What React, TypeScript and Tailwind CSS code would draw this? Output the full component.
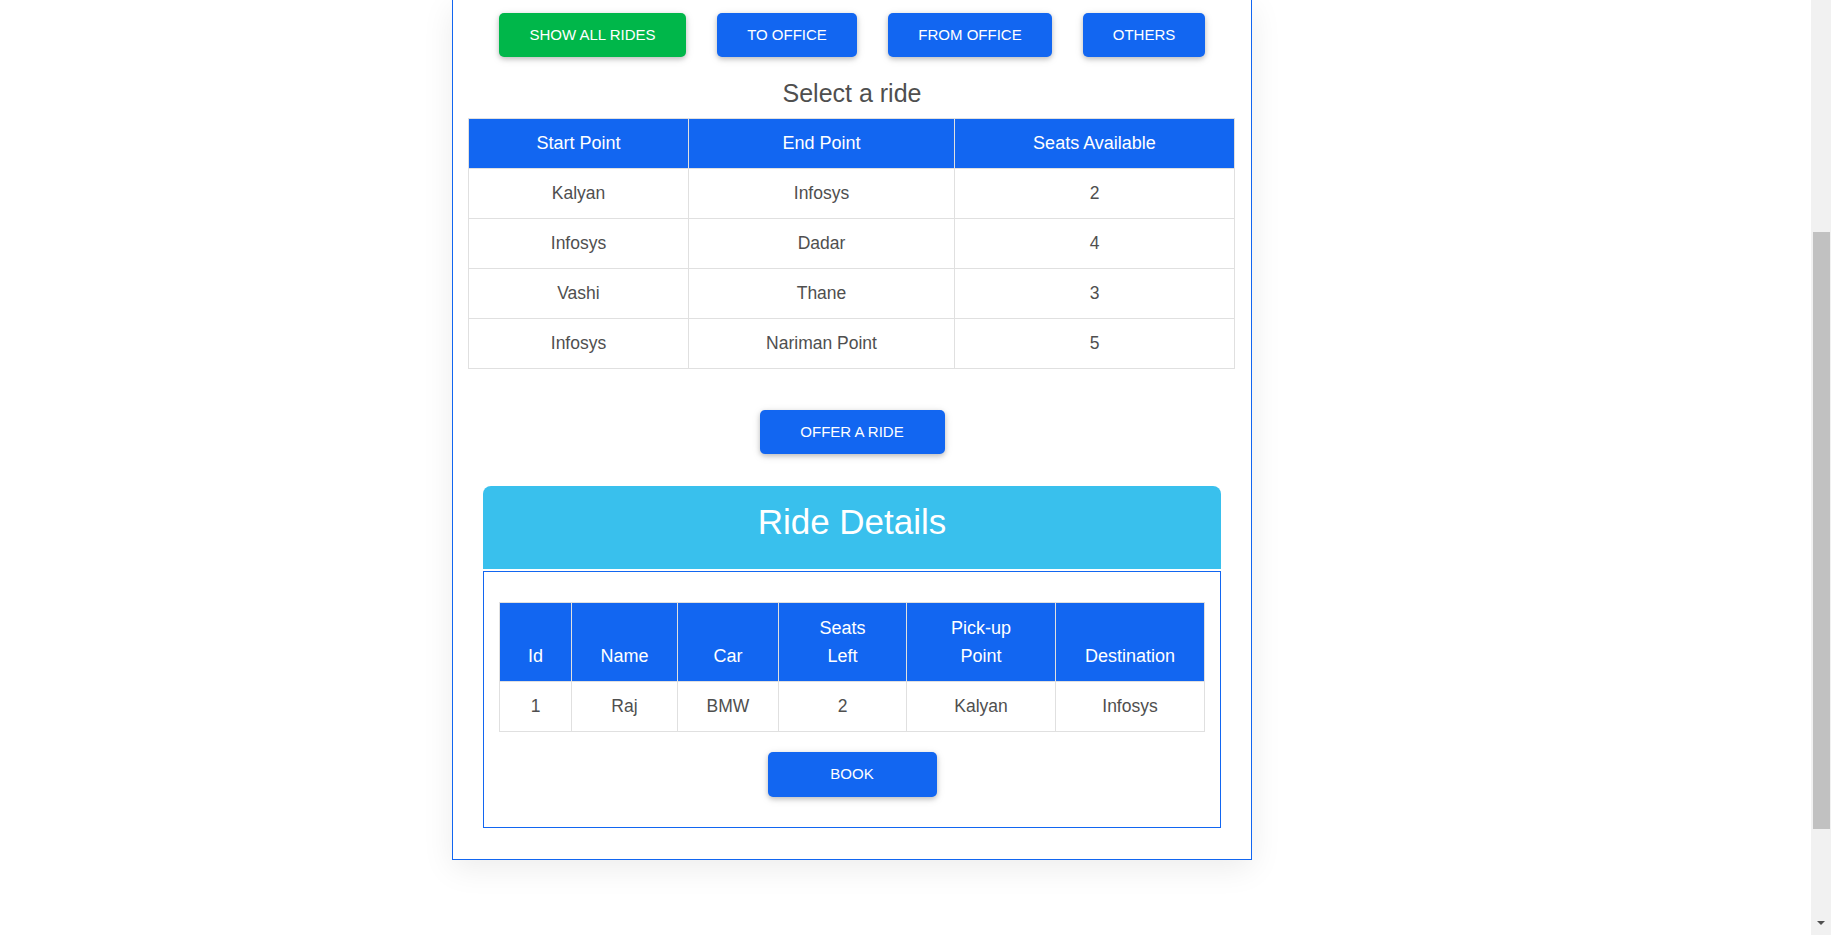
import React from "react";

const rides: [string, string, string][] = [
  ["Kalyan", "Infosys", "2"],
  ["Infosys", "Dadar", "4"],
  ["Vashi", "Thane", "3"],
  ["Infosys", "Nariman Point", "5"],
];

const btnBase =
  "flex h-[44px] items-center justify-center rounded-[5px] text-[15px] uppercase text-white shadow-[0_2px_5px_0_rgba(0,0,0,0.2),0_2px_10px_0_rgba(0,0,0,0.1)]";

export default function App() {
  return (
    <div className="relative h-[935px] overflow-hidden bg-white font-['Liberation_Sans',Arial,sans-serif]">
      <div className="ml-[452px] w-[800px] border border-t-0 border-[#1266f1] bg-white pt-[13px] pb-[31px] shadow-[0_8px_30px_0_rgba(0,0,0,0.08)]">
        {/* filter buttons */}
        <div className="flex justify-center gap-[31px]">
          <button className={`${btnBase} w-[187px] bg-[#00b74a]`}>Show all rides</button>
          <button className={`${btnBase} w-[140px] bg-[#1266f1]`}>To office</button>
          <button className={`${btnBase} w-[164px] bg-[#1266f1]`}>From office</button>
          <button className={`${btnBase} w-[122px] bg-[#1266f1]`}>Others</button>
        </div>

        <div className="mt-[21px] text-center text-[25px] leading-[30px] text-[#4f4f4f]">Select a ride</div>

        <table className="mt-[10px] ml-[15px] w-[767px] table-fixed border-collapse text-center">
          <thead>
            <tr>
              <th className="w-[220px] border border-[#e0e0e0] bg-[#1266f1] py-[11px] text-[18px] font-normal leading-[27px] text-white">
                Start Point
              </th>
              <th className="w-[266px] border border-[#e0e0e0] bg-[#1266f1] py-[11px] text-[18px] font-normal leading-[27px] text-white">
                End Point
              </th>
              <th className="border border-[#e0e0e0] bg-[#1266f1] py-[11px] text-[18px] font-normal leading-[27px] text-white">
                Seats Available
              </th>
            </tr>
          </thead>
          <tbody>
            {rides.map((r, i) => (
              <tr key={i}>
                {r.map((c, j) => (
                  <td
                    key={j}
                    className="border border-[#e0e0e0] py-[11px] text-[17.5px] leading-[27px] text-[#4f4f4f]"
                  >
                    {c}
                  </td>
                ))}
              </tr>
            ))}
          </tbody>
        </table>

        <button className={`${btnBase} mx-auto mt-[41px] w-[185px] bg-[#1266f1]`}>Offer a ride</button>

        {/* Ride details */}
        <div className="mt-[32px] ml-[30px] w-[738px]">
          <div className="h-[83px] rounded-t-[8px] bg-[#39c0ed] pt-[16px] text-center text-[35px] leading-[40px] text-white">
            Ride Details
          </div>
          <div className="mt-[2px] border border-[#1266f1] px-[15px] pt-[30px] pb-[30px]">
            <table className="w-full table-fixed border-collapse text-center">
              <thead>
                <tr>
                  <th className="w-[72px] border border-[#e0e0e0] bg-[#1266f1] py-[11px] align-bottom text-[18px] font-normal leading-[28px] text-white">
                    Id
                  </th>
                  <th className="w-[106px] border border-[#e0e0e0] bg-[#1266f1] py-[11px] align-bottom text-[18px] font-normal leading-[28px] text-white">
                    Name
                  </th>
                  <th className="w-[101px] border border-[#e0e0e0] bg-[#1266f1] py-[11px] align-bottom text-[18px] font-normal leading-[28px] text-white">
                    Car
                  </th>
                  <th className="w-[128px] border border-[#e0e0e0] bg-[#1266f1] py-[11px] align-bottom text-[18px] font-normal leading-[28px] text-white">
                    Seats
                    <br />
                    Left
                  </th>
                  <th className="w-[149px] border border-[#e0e0e0] bg-[#1266f1] py-[11px] align-bottom text-[18px] font-normal leading-[28px] text-white">
                    Pick-up
                    <br />
                    Point
                  </th>
                  <th className="border border-[#e0e0e0] bg-[#1266f1] py-[11px] align-bottom text-[18px] font-normal leading-[28px] text-white">
                    Destination
                  </th>
                </tr>
              </thead>
              <tbody>
                <tr>
                  {["1", "Raj", "BMW", "2", "Kalyan", "Infosys"].map((c, j) => (
                    <td
                      key={j}
                      className="border border-[#e0e0e0] py-[11px] text-[17.5px] leading-[27px] text-[#4f4f4f]"
                    >
                      {c}
                    </td>
                  ))}
                </tr>
              </tbody>
            </table>
            <button className={`${btnBase} mx-auto mt-[20px] h-[45px] w-[169px] bg-[#1266f1]`}>Book</button>
          </div>
        </div>
      </div>

      {/* browser scrollbar */}
      <div className="fixed top-0 right-0 h-[935px] w-[20px] bg-[#f1f1f1]">
        <div className="absolute top-[232px] left-[2px] h-[597px] w-[17px] bg-[#c1c1c1]" />
        <div className="absolute top-[921px] left-[6px] h-0 w-0 border-x-[4px] border-t-[4px] border-x-transparent border-t-[#505050]" />
      </div>
    </div>
  );
}
